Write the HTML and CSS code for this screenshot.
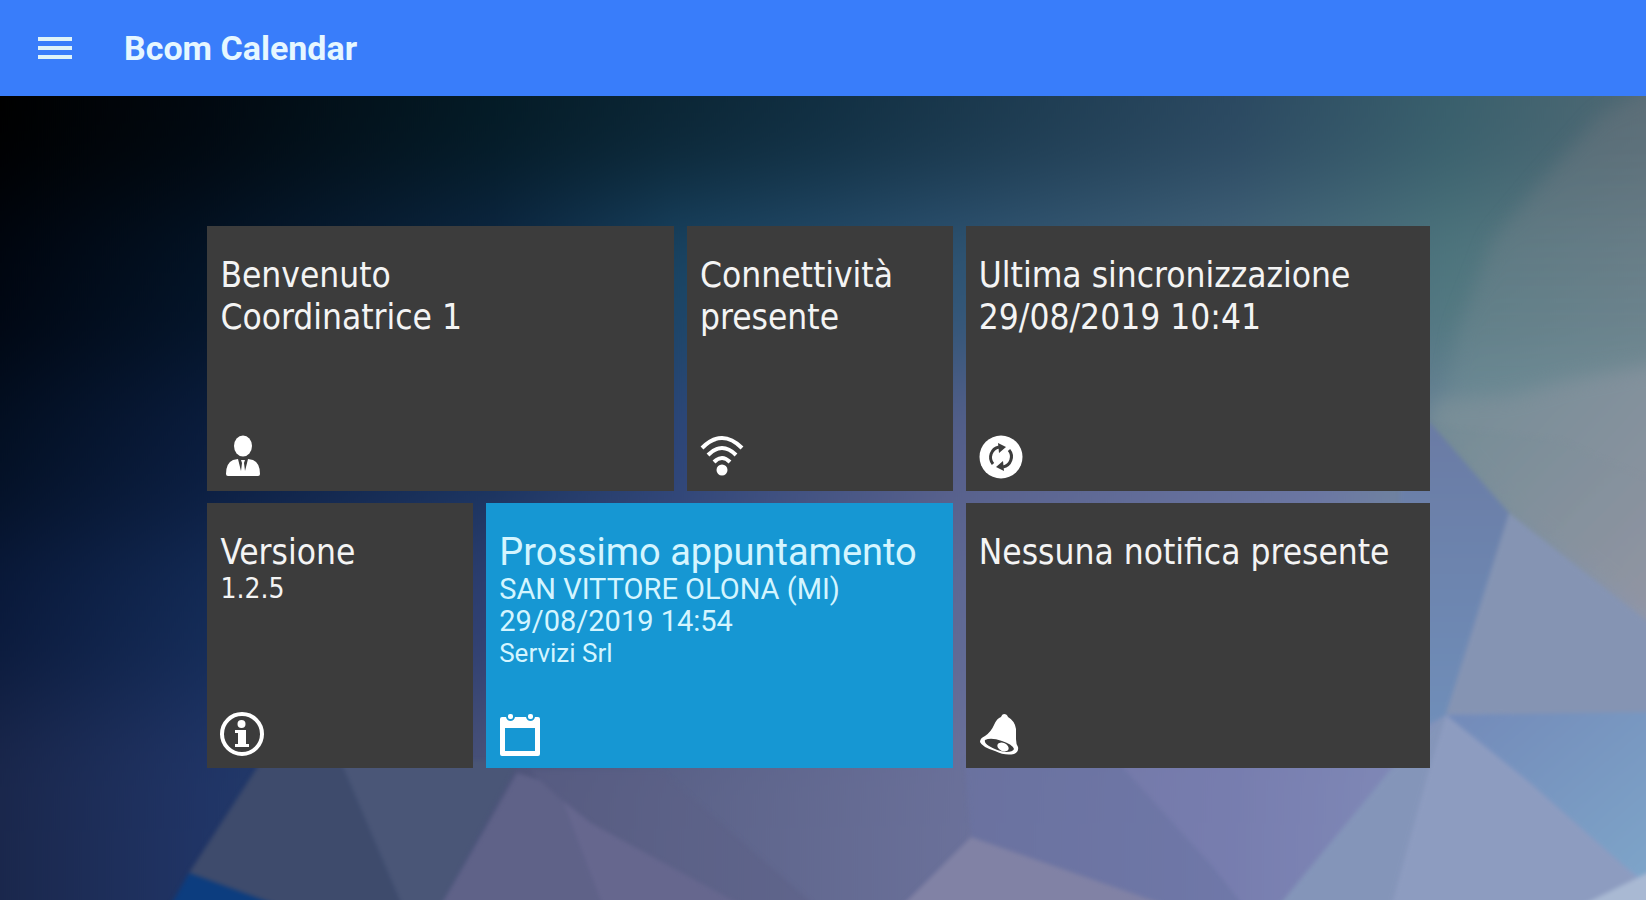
FILE: index.html
```html
<!DOCTYPE html>
<html lang="it">
<head>
<meta charset="utf-8">
<meta name="viewport" content="width=device-width, initial-scale=1">
<title>Bcom Calendar</title>
<link rel="stylesheet" href="styles.css">
</head>
<body>
<header class="topbar">
  <button class="menu-button" type="button" aria-label="Menu">
    <svg class="menu-icon" viewBox="0 0 34 24" aria-hidden="true"><path d="M0 3h34M0 12h34M0 21h34"/></svg>
  </button>
  <h1 class="app-title">Bcom Calendar</h1>
</header>
<main class="home">
  <svg class="backdrop" viewBox="0 96 1646 804" preserveAspectRatio="none" aria-hidden="true">
    <defs>
      <linearGradient id="b1" gradientUnits="userSpaceOnUse" x1="0" x2="1646" y1="0" y2="0"><stop offset="0" stop-color="#000000"/><stop offset=".12" stop-color="#01080f"/><stop offset=".3" stop-color="#041b26"/><stop offset=".5" stop-color="#112f42"/><stop offset=".75" stop-color="#2b4961"/><stop offset=".88" stop-color="#395f6c"/><stop offset="1" stop-color="#4f6974"/></linearGradient>
      <linearGradient id="b2" gradientUnits="userSpaceOnUse" x1="0" x2="1646" y1="0" y2="0"><stop offset="0" stop-color="#000611"/><stop offset=".12" stop-color="#031326"/><stop offset=".3" stop-color="#0d2846"/><stop offset=".41" stop-color="#1a4565"/><stop offset=".58" stop-color="#2f5575"/><stop offset=".75" stop-color="#44657c"/><stop offset=".88" stop-color="#50777f"/><stop offset="1" stop-color="#647d87"/></linearGradient>
      <linearGradient id="b3" gradientUnits="userSpaceOnUse" x1="0" x2="1646" y1="0" y2="0"><stop offset="0" stop-color="#031024"/><stop offset=".12" stop-color="#0a1c3d"/><stop offset=".3" stop-color="#17325c"/><stop offset=".41" stop-color="#2d4579"/><stop offset=".58" stop-color="#565f8b"/><stop offset=".8" stop-color="#6875a0"/><stop offset=".9" stop-color="#6f8b96"/><stop offset="1" stop-color="#7d9299"/></linearGradient>
      <linearGradient id="b4" gradientUnits="userSpaceOnUse" x1="0" x2="1646" y1="0" y2="0"><stop offset="0" stop-color="#0a1a3c"/><stop offset=".12" stop-color="#132a55"/><stop offset=".28" stop-color="#2d3e70"/><stop offset=".41" stop-color="#3f4c78"/><stop offset=".58" stop-color="#5f6994"/><stop offset=".8" stop-color="#747ba9"/><stop offset=".9" stop-color="#8093b3"/><stop offset="1" stop-color="#8797b8"/></linearGradient>
      <linearGradient id="b5" gradientUnits="userSpaceOnUse" x1="0" x2="1646" y1="0" y2="0"><stop offset="0" stop-color="#1a274c"/><stop offset=".12" stop-color="#203465"/><stop offset=".16" stop-color="#22396a"/><stop offset=".32" stop-color="#52577c"/><stop offset=".41" stop-color="#5c6389"/><stop offset=".58" stop-color="#6a7099"/><stop offset=".75" stop-color="#767faf"/><stop offset=".9" stop-color="#8b9cc4"/><stop offset="1" stop-color="#8b9fca"/></linearGradient>
      <linearGradient id="fadeBlue" x1="0" y1="0" x2="1" y2="1"><stop offset="0" stop-color="#738ab9"/><stop offset="1" stop-color="#7ea5c9"/></linearGradient>
      <linearGradient id="fadeGrey" x1="0" y1="0" x2="1" y2="1"><stop offset="0" stop-color="#738c95"/><stop offset="1" stop-color="#9496a4"/></linearGradient>
      <linearGradient id="fadeTop" x1="0" y1="1" x2="0" y2="0"><stop offset="0" stop-color="#718d98" stop-opacity=".45"/><stop offset="1" stop-color="#74757c" stop-opacity=".35"/></linearGradient>
      <linearGradient id="fadeNavy" x1="0" y1="0" x2="0" y2="1"><stop offset="0" stop-color="#6a7aa3"/><stop offset="1" stop-color="#708fba"/></linearGradient>
      <filter id="soft" x="-10%" y="-10%" width="120%" height="120%" color-interpolation-filters="sRGB"><feGaussianBlur stdDeviation="0 50"/></filter>
      <filter id="edge" x="-5%" y="-5%" width="110%" height="110%" color-interpolation-filters="sRGB"><feGaussianBlur stdDeviation="2"/></filter>
      <filter id="haze" x="-20%" y="-20%" width="140%" height="140%" color-interpolation-filters="sRGB"><feGaussianBlur stdDeviation="9"/></filter>
    </defs>
    <g filter="url(#soft)">
      <path fill="url(#b1)" d="M0-100h1646v300H0z"/>
      <path fill="url(#b2)" d="M0 200h1646v170H0z"/>
      <path fill="url(#b3)" d="M0 370h1646v160H0z"/>
      <path fill="url(#b4)" d="M0 530h1646v170H0z"/>
      <path fill="url(#b5)" d="M0 700h1646v400H0z"/>
    </g>
    <g filter="url(#haze)">
      <path fill="url(#fadeTop)" d="M1680 70L1599 116 1536 188 1493 240 1459 328 1446 395H1680z"/>
      <path fill="url(#fadeGrey)" d="M1425 420L1440 398 1513 396 1570 380 1680 360V640L1509 513z"/>
    </g>
    <g filter="url(#edge)">
      <path fill="url(#fadeGrey)" opacity=".5" d="M1433 426L1560 440 1650 480V624L1509 513z"/>
      <path fill="url(#fadeNavy)" d="M1400 403L1433 426 1509 513 1446 715 1400 740z"/>
      <path fill="#8594b3" d="M1509 513L1650 624V714H1446z"/>
      <path fill="url(#fadeBlue)" d="M1446 715L1650 712V885L1623 865 1529 782z"/>
      <path fill="#8d9cc0" d="M1446 715L1529 782 1623 865 1650 890V910H1390L1428 772z"/>
      <path fill="#8495b9" d="M1446 715L1389 772 1275 910H1390L1428 772z"/>
      <path fill="#a9b9d3" d="M1643 875L1650 872V910H1572z"/>
      <path fill="#6a73a3" opacity=".6" d="M965 760H1116L1213 867 1247 910H1180L971 837z"/>
      <path fill="#7a7db0" opacity=".45" d="M1116 760H1398L1275 910H1247L1213 867z"/>
      <path fill="#8182a5" d="M971 837L1180 910H898z"/>
      <path fill="#3e4b6c" d="M262 760H340L404 910H290L189 873z"/>
      <path fill="#4a5677" d="M340 760H520L438 910H404z"/>
      <path fill="#5f6288" d="M517 773L540 780 562 800 604 910H438z"/>
      <path fill="#5c5f86" opacity=".5" d="M540 780L562 800 591 823 750 910H820L660 770H530z"/>
      <path fill="#66678e" d="M562 800L591 823 750 910H604z"/>
      <path fill="#0c3d7f" d="M189 873L290 910H168z"/>
    </g>
  </svg>
  <section class="tiles" aria-label="Riepilogo">
    <article class="tile tile-user">
      <h2 class="tile-title">Benvenuto<br>Coordinatrice 1</h2>
      <svg class="tile-icon" viewBox="0 0 44 44" aria-hidden="true"><ellipse cx="23" cy="11" rx="9" ry="10.500"/><path d="M13 25l5-1 3 12 1-8-1-3h4l-1 3 1 8 3-12 5 1q7 3 7 14 0 2-2 2H8q-2 0-2-2 0-11 7-14z"/></svg>
    </article>
    <article class="tile tile-net">
      <h2 class="tile-title">Connettività presente</h2>
      <svg class="tile-icon" viewBox="0 0 44 44" aria-hidden="true"><circle cx="22" cy="35" r="5.500"/><path class="stroke" d="M2 13Q22-7 42 13M8 20Q22 6 36 20M14 27Q22 19 30 27"/></svg>
    </article>
    <article class="tile tile-sync">
      <h2 class="tile-title">Ultima sincronizzazione 29/08/2019 10:41</h2>
      <svg class="tile-icon" viewBox="0 0 44 44" aria-hidden="true"><circle cx="22" cy="22" r="21.500"/><g class="cut"><path class="cut-line" d="M14 29A10.500 10.500 0 0 1 20 12M30 15A10.500 10.500 0 0 1 24 32"/><path d="M19 8l8 4-7 6zM25 36l-8-4 7-6z"/></g></svg>
    </article>
    <article class="tile tile-version">
      <h2 class="tile-title">Versione</h2>
      <p class="tile-line">1.2.5</p>
      <svg class="tile-icon" viewBox="0 0 44 44" aria-hidden="true"><circle class="ring" cx="22" cy="22" r="20"/><circle cx="21.500" cy="12" r="4"/><path d="M15 18h11v14h3v3H15v-3h3V21h-3z"/></svg>
    </article>
    <article class="tile tile-next">
      <h2 class="tile-title">Prossimo appuntamento</h2>
      <p class="tile-line">SAN VITTORE OLONA (MI)</p>
      <p class="tile-line">29/08/2019 14:54</p>
      <p class="tile-line tile-client">Servizi Srl</p>
      <svg class="tile-icon" viewBox="0 0 44 44" aria-hidden="true"><path fill-rule="evenodd" d="M3 5h4q1 4 4.500 4T16 5h11q1 4 4.500 4T36 5h3q2 0 2 2v35q0 2-2 2H3q-2 0-2-2V7q0-2 2-2zm3 11v23h30V16z"/><rect x="9" y="2" width="5" height="5" rx="2"/><rect x="29" y="2" width="5" height="5" rx="2"/></svg>
    </article>
    <article class="tile tile-alert">
      <h2 class="tile-title">Nessuna notifica presente</h2>
      <svg class="tile-icon" viewBox="0 0 44 44" aria-hidden="true"><path fill-rule="evenodd" d="M25 2q3 0 4 3 7 4 8 12v10q0 5 2 8 1 5-4 7-9 2-19-3Q3 35 1 30q0-4 5-6 6-4 9-11Q18 6 22 5q1-3 3-3zM6 28q-1 3 4 6 8 5 17 6 7 0 8-3-2-5-12-8-11-4-17-1z"/><ellipse cx="24" cy="35" rx="6" ry="4" transform="rotate(25 24 35)"/></svg>
    </article>
  </section>
</main>
</body>
</html>
```
FILE: styles.css
```css
* { box-sizing: border-box; }
body { margin: 0; min-height: 100vh; display: flex; flex-direction: column; background: #0c1e43; color: #f4f4f4; font-family: "DejaVu Sans Condensed", "DejaVu Sans", sans-serif; }
.topbar { display: flex; align-items: center; gap: 52px; height: 96px; padding: 0 38px; background: #397dfa; font-family: Roboto, sans-serif; }
.menu-button { display: flex; padding: 0; border: 0; background: none; cursor: pointer; }
.menu-icon { width: 34px; height: 24px; stroke: #dff3f8; stroke-width: 4; }
.app-title { margin: 0; font-size: 34px; font-weight: 700; color: #e6f7ff; }
.home { position: relative; flex: 1; padding: 130px 13.1% 130px 12.6%; }
.backdrop { position: absolute; inset: 0; width: 100%; height: 100%; }
.tiles { position: relative; display: grid; grid-template-columns: 266fr 188fr 266fr 465fr; gap: 12px 13px; }
.tile { display: flex; flex-direction: column; min-height: 265px; padding: 28px 13px 12px; background: #3c3c3c; }
.tile-user { grid-column: span 2; }
.tile-next { grid-column: span 2; background: #1697d3; color: #d4f5ff; font-family: Roboto, sans-serif; }
.tile-title { margin: 0; font-size: 35px; line-height: 42px; font-weight: 400; }
.tile-next .tile-title { font-size: 38px; }
.tile-line { margin: 0; font-size: 28px; line-height: 32px; }
.tile-next .tile-line { font-size: 29px; }
.tile-next .tile-client { font-size: 26px; }
.tile-icon { width: 44px; height: 44px; margin-top: auto; fill: #ffffff; }
.tile-icon .stroke { fill: none; stroke: #ffffff; stroke-width: 4; }
.tile-icon .ring { fill: none; stroke: #ffffff; stroke-width: 4; }
.tile-icon .cut { fill: #3c3c3c; }
.tile-icon .cut-line { fill: none; stroke: #3c3c3c; stroke-width: 3; }
```
